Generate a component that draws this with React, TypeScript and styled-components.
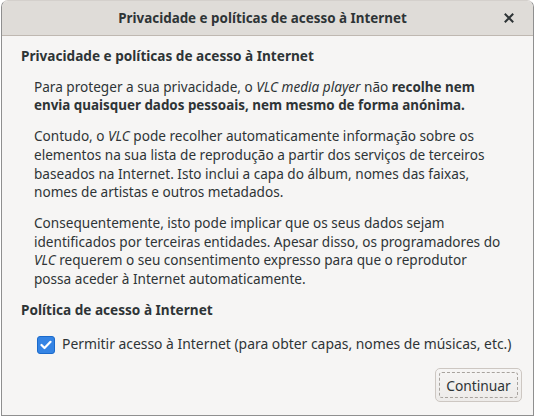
import * as React from 'react'
import styled, { createGlobalStyle } from 'styled-components'

const GlobalStyle = createGlobalStyle`
  html, body {
    margin: 0;
    padding: 0;
    background: #ffffff;
  }

  body {
    font-family: 'Noto Sans', 'Open Sans', sans-serif;
    color: #2e3436;
  }
`

const Window = styled.div`
  box-sizing: border-box;
  width: 533px;
  height: 416px;
  margin-left: 1px;
  display: flex;
  flex-direction: column;
  background: #f6f5f4;
  border: 1px solid #8f8f8f;
  border-top-color: #d4d0cc;
  border-radius: 7px 7px 0 0;
  overflow: hidden;
`

const TitleBar = styled.header`
  height: 34px;
  flex-shrink: 0;
  display: flex;
  align-items: center;
  justify-content: center;
  padding-right: 10px;
  position: relative;
  background: #dfdcd8;
  border-bottom: 1px solid #bfb8b1;
  font-size: 13.4px;
  font-weight: 700;
`

const CloseButton = styled.button`
  position: absolute;
  right: 16px;
  top: 9px;
  width: 16px;
  height: 16px;
  padding: 0;
  border: 0;
  background: none;
  display: flex;
  align-items: center;
  justify-content: center;
`

const Content = styled.main`
  flex: 1;
  display: flex;
  flex-direction: column;
  padding: 11px 12px 0 19px;
  font-size: 13.6px;
  line-height: 18.7px;
`

const Heading = styled.h2`
  margin: 0 0 12px;
  font-size: 13.6px;
  font-weight: 700;
`

const Paragraph = styled.p`
  margin: 0 0 12px 13px;
  font-size: 13.6px;
  white-space: nowrap;

  b {
    font-size: 13.4px;
  }
`

const CheckRow = styled.label`
  display: flex;
  align-items: center;
  gap: 7px;
  margin: 4px 0 0 16px;
  font-size: 13.9px;
  white-space: nowrap;
`

const CheckBox = styled.span`
  width: 18px;
  height: 18px;
  flex-shrink: 0;
  border-radius: 3px;
  background: #3584e4;
  border: 1px solid #1b6acb;
  box-sizing: border-box;
  display: flex;
  align-items: center;
  justify-content: center;
`

const Footer = styled.footer`
  display: flex;
  justify-content: flex-end;
  margin-top: 14px;
  margin-right: -1px;
`

const Button = styled.button`
  width: 87px;
  height: 34px;
  padding: 3px;
  border: 1px solid #cdc7c2;
  border-radius: 5px;
  background: linear-gradient(#f6f5f4, #edebe9);
  font-family: inherit;
  font-size: 13.8px;
  color: #2e3436;

  span {
    display: flex;
    align-items: center;
    justify-content: center;
    height: 100%;
    border: 1px dashed #a8a39e;
    border-radius: 3px;
    box-sizing: border-box;
  }
`

export default function App() {
  return (
    <>
      <GlobalStyle />
      <Window>
        <TitleBar>
          Privacidade e políticas de acesso à Internet
          <CloseButton aria-label="Fechar">
            <svg width="10" height="10" viewBox="0 0 10 10">
              <path d="M1.5 1.5 L8.5 8.5 M8.5 1.5 L1.5 8.5" stroke="#2e3436" strokeWidth="2" strokeLinecap="square" />
            </svg>
          </CloseButton>
        </TitleBar>
        <Content>
          <Heading>Privacidade e políticas de acesso à Internet</Heading>
          <Paragraph>
            Para proteger a sua privacidade, o <i>VLC media player</i> não <b>recolhe nem<br />
            envia quaisquer dados pessoais, nem mesmo de forma anónima.</b>
          </Paragraph>
          <Paragraph>
            Contudo, o <i>VLC</i> pode recolher automaticamente informação sobre os<br />
            elementos na sua lista de reprodução a partir dos serviços de terceiros<br />
            baseados na Internet. Isto inclui a capa do álbum, nomes das faixas,<br />
            nomes de artistas e outros metadados.
          </Paragraph>
          <Paragraph>
            Consequentemente, isto pode implicar que os seus dados sejam<br />
            identificados por terceiras entidades. Apesar disso, os programadores do<br />
            <i>VLC</i> requerem o seu consentimento expresso para que o reprodutor<br />
            possa aceder à Internet automaticamente.
          </Paragraph>
          <Heading>Política de acesso à Internet</Heading>
          <CheckRow>
            <CheckBox>
              <svg width="12" height="10" viewBox="0 0 12 10">
                <path d="M1.5 5 L4.5 8 L10.5 1.8" stroke="#ffffff" strokeWidth="2.2" fill="none" strokeLinecap="round" strokeLinejoin="round" />
              </svg>
            </CheckBox>
            Permitir acesso à Internet (para obter capas, nomes de músicas, etc.)
          </CheckRow>
          <Footer>
            <Button><span>Continuar</span></Button>
          </Footer>
        </Content>
      </Window>
    </>
  )
}
